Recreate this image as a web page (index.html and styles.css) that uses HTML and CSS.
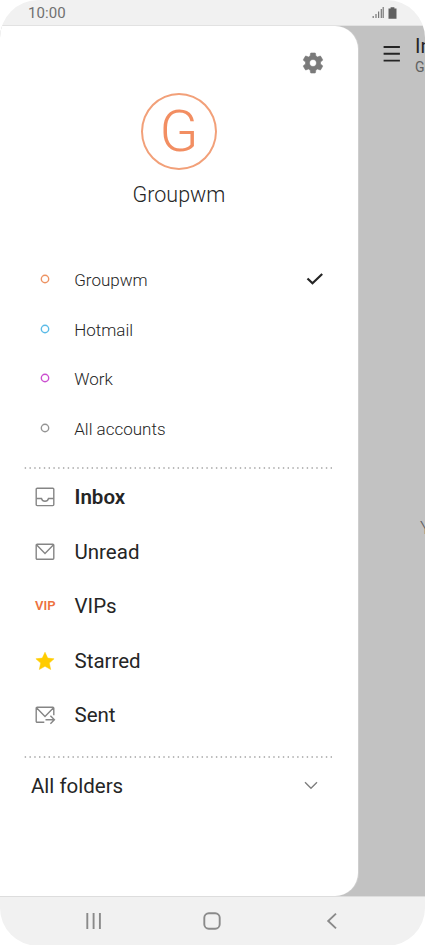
FILE: index.html
```html
<!DOCTYPE html>
<html lang="en">
<head>
<meta charset="utf-8">
<title>Email</title>
<link rel="stylesheet" href="styles.css">
</head>
<body>
<div class="phone">
  <header class="status">
    <span class="time">10:00</span>
    <svg class="status-icons" width="27" height="14" viewBox="0 0 27 14" fill="none">
      <path d="M1.2 10v2M4 8v4M6.6 5.5v6.500M9.300 3v9M11.200 1v11" stroke="#777" stroke-width="1.200"/>
      <path d="M18.600 1.200h3.800v1.300h2.100v10.300h-8V2.500h2.100z" fill="#606060"/>
    </svg>
  </header>
  <div class="stage">
    <main class="drawer">
      <button class="settings" aria-label="Settings">
        <svg width="24" height="24" viewBox="0 0 24 24"><path fill="#7a7a7a" stroke="#7a7a7a" stroke-width=".6" stroke-linejoin="round" d="M19.430 12.980c.04-.32.070-.640.070-.980s-.03-.660-.070-.980l2.110-1.650c.19-.15.240-.420.120-.640l-2-3.460c-.12-.22-.390-.3-.610-.22l-2.490 1c-.52-.4-1.080-.730-1.690-.980l-.380-2.650C14.460 2.180 14.250 2 14 2h-4c-.25 0-.46.18-.49.42l-.38 2.650c-.61.250-1.170.590-1.690.980l-2.490-1c-.23-.090-.490 0-.610.220l-2 3.460c-.13.220-.07.490.12.640l2.110 1.650c-.04.320-.07.650-.07.980s.03.660.07.980l-2.110 1.650c-.19.150-.24.420-.12.640l2 3.460c.12.220.39.300.61.220l2.490-1c.52.400 1.080.730 1.690.980l.38 2.650c.03.240.24.420.49.420h4c.25 0 .46-.18.490-.42l.38-2.650c.61-.25 1.170-.59 1.690-.98l2.490 1c.23.090.490 0 .610-.22l2-3.460c.12-.22.070-.49-.12-.64l-2.110-1.650zM12 15.500c-1.930 0-3.500-1.570-3.500-3.500s1.570-3.500 3.500-3.500 3.500 1.570 3.500 3.500-1.570 3.500-3.500 3.500z"/></svg>
      </button>
      <section class="profile">
        <div class="avatar"><span>G</span></div>
        <h1>Groupwm</h1>
      </section>
      <ul class="accounts">
        <li><svg class="ring orange" viewBox="0 0 10 10"><circle cx="5" cy="5" r="3.700"/></svg><span>Groupwm</span>
          <svg class="check" width="18" height="14" viewBox="0 0 18 14"><path d="M1.500 6.500l5 4.800L16.200 2" fill="none" stroke="#252525" stroke-width="2.200"/></svg></li>
        <li><svg class="ring blue" viewBox="0 0 10 10"><circle cx="5" cy="5" r="3.700"/></svg><span>Hotmail</span></li>
        <li><svg class="ring purple" viewBox="0 0 10 10"><circle cx="5" cy="5" r="3.700"/></svg><span>Work</span></li>
        <li><svg class="ring gray" viewBox="0 0 10 10"><circle cx="5" cy="5" r="3.700"/></svg><span>All accounts</span></li>
      </ul>
      <svg class="dots" width="312" height="2"><path d="M.7 1H310"/></svg>
      <ul class="folders">
        <li class="current"><svg class="icon" viewBox="0 0 20 20"><rect x="1.200" y="1.200" width="17.600" height="17.400" rx="1"/><path d="M1.200 11.500h5.300c.5 1.800 1.800 2.700 3.500 2.700s3-.9 3.500-2.700h5.300"/></svg><span>Inbox</span></li>
        <li><svg class="icon" viewBox="0 0 20 20"><rect x="1.200" y="2.200" width="17.600" height="15" rx="1"/><path d="M1.500 2.700L10 11.500l8.500-8.800"/></svg><span>Unread</span></li>
        <li><b class="vip">VIP</b><span>VIPs</span></li>
        <li><svg class="icon" viewBox="0 0 20 20"><path class="star" d="M10 1.200l2.700 5.900 6.400.7-4.800 4.300 1.400 6.400L10 15.300l-5.700 3.200 1.400-6.400L.9 7.800l6.400-.7z"/></svg><span>Starred</span></li>
        <li><svg class="icon" viewBox="0 0 20 20"><path d="M9.300 17.200H2.200a1 1 0 0 1-1-1V3.200a1 1 0 0 1 1-1h15.600a1 1 0 0 1 1 1v7M1.500 2.700L10 11.500l8.500-8.800M10.500 14.700h8.800M15.400 10.700l4 4-4 4"/></svg><span>Sent</span></li>
      </ul>
      <svg class="dots lower" width="312" height="2"><path d="M.7 1H310"/></svg>
      <div class="all"><span>All folders</span><svg width="14" height="10" viewBox="0 0 14 10"><path d="M1 1.300l6 6 6-6" fill="none" stroke="#808080" stroke-width="1.400"/></svg></div>
    </main>
    <aside class="behind">
      <svg width="18" height="18" viewBox="0 0 18 18"><path d="M.6 2h16.300M.6 8.800h16.300M.6 15.600h16.300" stroke="#252525" stroke-width="1.900"/></svg>
      <div class="title"><strong>Inbox</strong><small>Groupwm</small></div>
      <p class="empty">You</p>
    </aside>
  </div>
  <nav class="navbar">
    <svg width="18" height="18" viewBox="0 0 18 18"><path d="M3.300 1v16M9.600 1v16M15.900 1v16"/></svg>
    <svg width="18" height="18" viewBox="0 0 18 18"><rect x="1.300" y="1.300" width="15.400" height="15.400" rx="4.500"/></svg>
    <svg width="18" height="18" viewBox="0 0 18 18"><path d="M13 1.600L5.200 9l7.800 7.400"/></svg>
  </nav>
</div>
</body>
</html>
```
FILE: styles.css
```css
* { box-sizing: border-box; }
body { margin: 0; background: #fff; font-family: Roboto, "Liberation Sans", sans-serif; color: #252525; }
ul, h1, p { margin: 0; padding: 0; list-style: none; }
.phone { width: 425px; height: 946px; padding-bottom: 1px; display: flex; flex-direction: column; overflow: hidden; border-radius: 38px; }
.status { height: 26px; flex: none; display: flex; justify-content: space-between; align-items: center; padding: 0 26px 0 28px; background: #f1f1f1; border-bottom: 1px solid #e2e2e2; }
.time { font-size: 15px; line-height: 24px; color: #707070; letter-spacing: .1px; }
.status-icons { margin-top: 1px; }
.stage { flex: 1; min-height: 0; display: flex; background: #c2c2c2; }
.drawer { width: 358px; flex: none; background: #fff; border-radius: 0 23px 23px 0; display: flex; flex-direction: column; box-shadow: 1px 0 0 #cecece; }
.settings { border: 0; padding: 0; background: none; width: 24px; height: 24px; margin: 25px 0 0 301px; }
.settings svg { display: block; }
.profile { display: flex; flex-direction: column; align-items: center; margin-top: 18px; }
.avatar { width: 76px; height: 77px; border: 2px solid #f2a079; border-radius: 50%; display: flex; align-items: center; justify-content: center; color: #f28e62; font-size: 57px; font-weight: 300; line-height: 75px; }
h1 { font-size: 21.500px; font-weight: 300; line-height: 26px; margin-top: 12px; }
.accounts { margin-top: 46px; }
.accounts li { height: 49.700px; display: flex; align-items: center; font-size: 17px; font-weight: 300; padding: 0 34px 0 40px; }
.accounts span { padding-top: 2px; }
.ring { width: 10px; height: 10px; margin-right: 24.200px; fill: none; stroke-width: 1.400; }
.orange { stroke: #ed9363; }
.blue { stroke: #5bbbe7; }
.purple { stroke: #cb4fd0; }
.gray { stroke: #949494; }
.check { margin-left: auto; }
.dots { display: block; flex: none; margin: 14.500px 0 0 24px; }
.dots.lower { margin-top: 13.500px; }
.dots path { stroke: #a3a3a3; stroke-width: 1.300; stroke-dasharray: 1.400 3.380; }
.folders { margin-top: 1px; }
.folders li { height: 54.400px; display: flex; align-items: center; padding-left: 35px; font-size: 20.500px; }
.folders .current { font-weight: 600; }
.icon { width: 20px; height: 20px; margin-right: 19.500px; fill: none; stroke: #858585; stroke-width: 1.400; overflow: visible; }
.icon .star { fill: #fc0; stroke: #fc0; stroke-width: .5; }
.vip { width: 20px; margin: 0 19.500px 1px 0; font-size: 13px; font-weight: 600; color: #ed7140; }
.all { display: flex; justify-content: space-between; align-items: center; height: 56px; padding: 0 40px 0 31px; font-size: 20.500px; }
.behind { flex: 1; min-width: 0; display: grid; grid-template: 53px 1fr / 18px auto; column-gap: 14px; padding-left: 25px; overflow: hidden; }
.behind svg { margin-top: 19px; }
.title { display: flex; flex-direction: column; padding-top: 8px; }
.title strong { font-size: 20px; line-height: 24px; font-weight: 400; }
.title small { font-size: 14px; line-height: 19px; color: #606060; }
.empty { grid-column: 2; padding: 438px 0 0 5px; font-size: 18px; line-height: 22px; font-weight: 300; color: #606060; }
.navbar { height: 49px; flex: none; background: #f1f1f1; border-top: 1px solid #ddd; display: flex; align-items: center; justify-content: space-between; padding: 0 84.500px 0 83.500px; }
.navbar svg { fill: none; stroke: #8a8a8a; stroke-width: 1.900; }
```
